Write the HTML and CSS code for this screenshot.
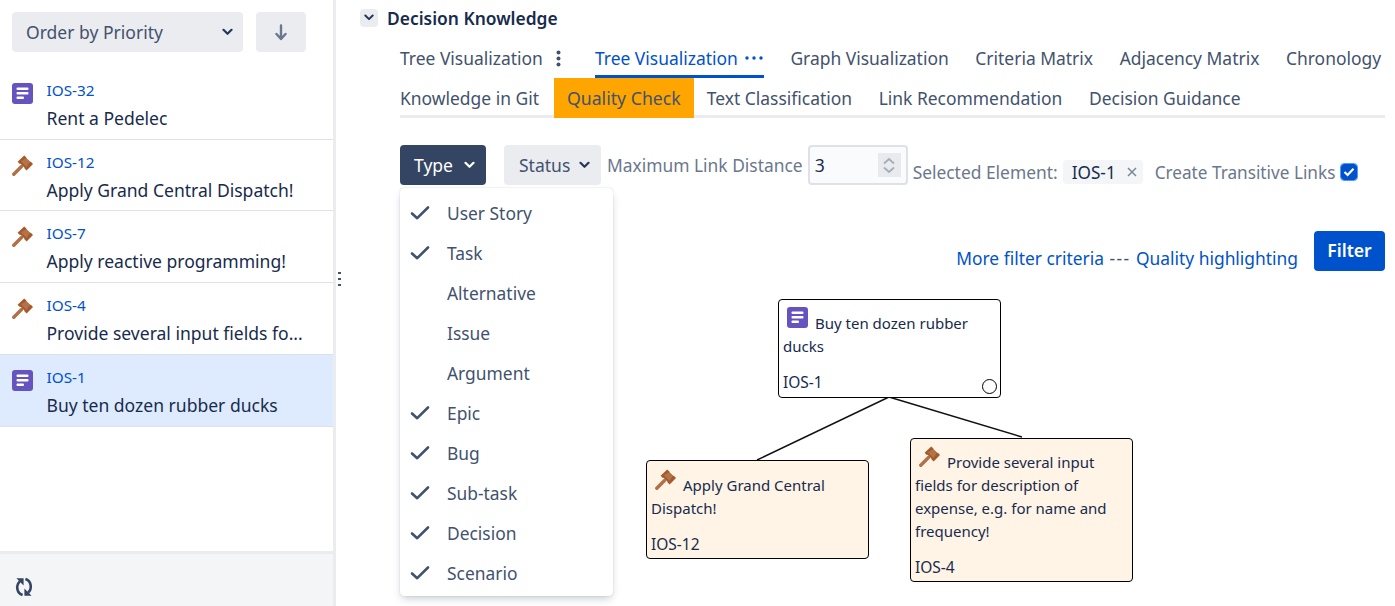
FILE: index.html
```html
<!DOCTYPE html>
<html lang="en">
<head>
<meta charset="utf-8">
<title>Decision Knowledge</title>
<link rel="stylesheet" href="styles.css">
</head>
<body>
<svg class="defs" width="0" height="0" aria-hidden="true">
  <defs>
    <symbol id="story" viewBox="0 0 21 21">
      <rect width="21" height="21" rx="3" fill="#6554c0"/>
      <rect x="4.5" y="4.5" width="12" height="2.6" rx="1" fill="#fff"/>
      <rect x="4.5" y="9" width="12" height="2.6" rx="1" fill="#fff"/>
      <rect x="4.5" y="13.4" width="7.5" height="2.6" rx="1" fill="#fff"/>
    </symbol>
    <symbol id="gavel" viewBox="0 0 21 21">
      <path d="M1.8 19.2 L9.5 11.5" stroke="#b0714a" stroke-width="3.4" stroke-linecap="round" fill="none"/>
      <path d="M5.6 6.8 L12.2 0.4 L14.4 2.4 L14.4 3.2 L18 6.8 L18.8 6.8 L21 9 L14.6 15.4 L12.4 13.2 L12.4 12.4 L8.6 8.8 L7.8 8.9 Z" fill="#a45a2a"/>
      <path d="M9 6.2 L14.2 3.2 L18 6.8 L14.4 12 Z" fill="#b5734a"/>
    </symbol>
    <symbol id="chev" viewBox="0 0 12 8">
      <path d="M1.6 1.6 L6 6 L10.4 1.6" fill="none" stroke="currentColor" stroke-width="2.4" stroke-linecap="round" stroke-linejoin="round"/>
    </symbol>
    <symbol id="check" viewBox="0 0 20 16">
      <path d="M2 8.5 L7.2 13.2 L18 2.5" fill="none" stroke="#42526e" stroke-width="2.6" stroke-linecap="round" stroke-linejoin="round"/>
    </symbol>
  </defs>
</svg>
<div class="page">
  <aside class="sidebar">
    <div class="sort-bar">
      <div class="select"><span>Order by Priority</span><svg class="chev"><use href="#chev"/></svg></div>
      <button class="sort-btn" aria-label="Sort direction">
        <svg width="12" height="17" viewBox="0 0 12 17"><path d="M6 1.5 V15 M1.5 10 L6 15 L10.5 10" fill="none" stroke="#6b778c" stroke-width="2.4" stroke-linecap="round" stroke-linejoin="round"/></svg>
      </button>
    </div>
    <ul class="issues">
      <li class="issue"><svg class="issue-icon"><use href="#story"/></svg><div class="issue-body"><a class="issue-key">IOS-32</a><div class="issue-title">Rent a Pedelec</div></div></li>
      <li class="issue"><svg class="issue-icon"><use href="#gavel"/></svg><div class="issue-body"><a class="issue-key">IOS-12</a><div class="issue-title">Apply Grand Central Dispatch!</div></div></li>
      <li class="issue"><svg class="issue-icon"><use href="#gavel"/></svg><div class="issue-body"><a class="issue-key">IOS-7</a><div class="issue-title">Apply reactive programming!</div></div></li>
      <li class="issue"><svg class="issue-icon"><use href="#gavel"/></svg><div class="issue-body"><a class="issue-key">IOS-4</a><div class="issue-title">Provide several input fields fo...</div></div></li>
      <li class="issue active"><svg class="issue-icon"><use href="#story"/></svg><div class="issue-body"><a class="issue-key">IOS-1</a><div class="issue-title">Buy ten dozen rubber ducks</div></div></li>
    </ul>
    <div class="side-footer">
      <svg width="20" height="20" viewBox="0 0 20 20"><path d="M8.6 18 C2.6 16.2 1.6 8.4 5.8 4.4 M11.4 2 C17.4 3.8 18.4 11.6 14.2 15.6" fill="none" stroke="#344563" stroke-width="2.6"/><path d="M2.4 1.2 L9.6 1.2 L9.6 8.4 Z M17.6 18.8 L10.4 18.8 L10.4 11.6 Z" fill="#344563"/></svg>
    </div>
  </aside>
  <div class="divider"><span class="grip"></span></div>
  <main class="main">
    <header class="section-head">
      <span class="toggle"><svg class="chev-sm"><use href="#chev"/></svg></span>
      <h2>Decision Knowledge</h2>
    </header>
    <nav class="tabs">
      <div class="tab-row">
        <span class="tab first">Tree Visualization<svg class="kebab" width="5" height="17" viewBox="0 0 5 17"><circle cx="2.5" cy="2.5" r="2" fill="#42526e"/><circle cx="2.5" cy="8.5" r="2" fill="#42526e"/><circle cx="2.5" cy="14.5" r="2" fill="#42526e"/></svg></span>
        <span class="tab current">Tree Visualization<svg class="dots" width="18" height="4" viewBox="0 0 18 4"><circle cx="2" cy="2" r="1.7" fill="#0052cc"/><circle cx="9" cy="2" r="1.7" fill="#0052cc"/><circle cx="16" cy="2" r="1.7" fill="#0052cc"/></svg></span>
        <span class="tab">Graph Visualization</span>
        <span class="tab">Criteria Matrix</span>
        <span class="tab">Adjacency Matrix</span>
        <span class="tab">Chronology</span>
      </div>
      <div class="tab-row lower">
        <span class="tab first">Knowledge in Git</span>
        <span class="tab quality">Quality Check</span>
        <span class="tab">Text Classification</span>
        <span class="tab">Link Recommendation</span>
        <span class="tab">Decision Guidance</span>
      </div>
    </nav>
    <div class="filters">
      <button class="drop open">Type<svg class="chev"><use href="#chev"/></svg></button>
      <button class="drop status">Status<svg class="chev"><use href="#chev"/></svg></button>
      <label class="muted dist-label">Maximum Link Distance</label>
      <div class="num-input"><span>3</span><span class="spin"><svg width="14" height="8" viewBox="0 0 14 8"><path d="M2 6.5 L7 2 L12 6.5" fill="none" stroke="#a5adba" stroke-width="1.8"/></svg><svg width="14" height="8" viewBox="0 0 14 8"><path d="M2 1.5 L7 6 L12 1.5" fill="none" stroke="#a5adba" stroke-width="1.8"/></svg></span></div>
      <label class="muted sel-label">Selected Element:</label>
      <span class="chip">IOS-1<svg width="10" height="10" viewBox="0 0 10 10"><path d="M1 1 L9 9 M9 1 L1 9" stroke="#7a869a" stroke-width="1.5"/></svg></span>
      <label class="muted trans-label">Create Transitive Links</label>
      <span class="checkbox"><svg width="12" height="10" viewBox="0 0 12 10"><path d="M1.5 5 L4.6 8 L10.5 1.8" fill="none" stroke="#fff" stroke-width="2.2"/></svg></span>
    </div>
    <div class="actions">
      <span class="links"><a>More filter criteria</a><span class="sep">---</span><a>Quality highlighting</a></span>
      <button class="filter-btn">Filter</button>
    </div>
    <div class="canvas">
      <svg class="edges" width="1035" height="335" viewBox="0 0 1035 335"><path d="M529 126 L397 189 M529 126 L662 166" fill="none" stroke="#111" stroke-width="1.4"/></svg>
      <div class="node root"><svg class="node-icon"><use href="#story"/></svg><span class="node-title">Buy ten dozen rubber ducks</span><div class="node-key">IOS-1</div><span class="node-ring"></span></div>
      <div class="node warn n12"><svg class="node-icon"><use href="#gavel"/></svg><span class="node-title">Apply Grand Central Dispatch!</span><div class="node-key">IOS-12</div></div>
      <div class="node warn n4"><svg class="node-icon"><use href="#gavel"/></svg><span class="node-title">Provide several input fields for description of expense, e.g. for name and frequency!</span><div class="node-key">IOS-4</div></div>
    </div>
  </main>
</div>
<ul class="menu">
  <li><svg class="tick"><use href="#check"/></svg>User Story</li>
  <li><svg class="tick"><use href="#check"/></svg>Task</li>
  <li class="off">Alternative</li>
  <li class="off">Issue</li>
  <li class="off">Argument</li>
  <li><svg class="tick"><use href="#check"/></svg>Epic</li>
  <li><svg class="tick"><use href="#check"/></svg>Bug</li>
  <li><svg class="tick"><use href="#check"/></svg>Sub-task</li>
  <li><svg class="tick"><use href="#check"/></svg>Decision</li>
  <li><svg class="tick"><use href="#check"/></svg>Scenario</li>
</ul>
</body>
</html>
```
FILE: styles.css
```css
* { box-sizing: border-box; }
html, body { margin: 0; height: 606px; overflow: hidden; background: #fff; }
body { font-family: "Noto Sans", "Open Sans", sans-serif; font-size: 17.55px; color: #172b4d; position: relative; }
.defs { position: absolute; }
.page { display: flex; height: 606px; }
.sidebar { width: 333px; flex: none; display: flex; flex-direction: column; }
.sort-bar { display: flex; gap: 13px; padding: 12px 0 0 12px; height: 68px; }
.select { width: 231px; height: 40px; background: #ebecf0; border-radius: 4px; display: flex; align-items: center; justify-content: space-between; padding: 0 10px 0 14px; color: #42526e; }
.chev { width: 11px; height: 8px; color: #253858; }
.sort-btn { width: 50px; height: 40px; background: #ebecf0; border: 0; border-radius: 4px; display: flex; align-items: center; justify-content: center; padding: 0; }
.issues { list-style: none; margin: 0; padding: 0; flex: 1; }
.issue { display: flex; gap: 13.5px; padding: 11px 12px 0; height: 72px; border-bottom: 1px solid #dfe1e6; }
.issue:nth-child(2) { height: 71px; }
.issue.active { background: #deebff; }
.issue-icon { width: 21px; height: 21px; flex: none; margin-top: 4px; }
.issue-body { min-width: 0; }
.issue-key { display: block; color: #0052cc; font-size: 15.3px; line-height: 22px; }
.issue-title { color: #172b4d; line-height: 28px; margin-top: 3px; white-space: nowrap; }
.side-footer { height: 55px; background: #f4f5f7; border-top: 3px solid #ebecf0; padding: 23px 0 0 14px; }
.divider { width: 3px; flex: none; background: #ebecf0; position: relative; }
.grip { position: absolute; left: 5px; top: 270px; width: 3px; height: 18px; background: radial-gradient(circle, #42526e 1.3px, transparent 1.5px) 0 0 / 3px 6px; }
.main { flex: 1; min-width: 0; padding: 0 10px 0 24px; display: flex; flex-direction: column; }
.section-head { display: flex; align-items: center; height: 39px; gap: 9px; padding-bottom: 4px; flex: none; }
.toggle { width: 18px; height: 18px; background: #ebecf0; border-radius: 4px; display: flex; align-items: center; justify-content: center; }
.chev-sm { width: 10px; height: 7px; color: #253858; }
.section-head h2 { margin: 0; font-size: 17.4px; font-weight: 600; color: #172b4d; }
.tabs { margin-left: 40px; height: 79px; flex: none; border-bottom: 3px solid #ebecf0; color: #42526e; font-size: 17.45px; }
.tab-row { display: flex; height: 39px; white-space: nowrap; }
.tab-row.lower { height: 40px; }
.tab { margin-left: 26.6px; display: flex; align-items: center; padding-bottom: 1px; }
.tab-row.lower .tab { padding-bottom: 0; }
.tab.first { margin-left: 0; }
.kebab { margin-left: 13px; margin-right: 7.5px; }
.tab.current { color: #0052cc; border-bottom: 3px solid #0052cc; padding-top: 2px; padding-bottom: 0; }
.dots { margin-left: 7px; margin-right: 1px; }
.tab-row .tab.quality { background: #ffa500; margin-left: 15px; margin-right: -13.6px; padding: 0 13px; font-size: 17.7px; }
.filters { display: flex; align-items: center; margin: 27px 0 0 40px; height: 40px; flex: none; white-space: nowrap; }
.drop { font: inherit; height: 40px; border: 0; border-radius: 4px; display: flex; align-items: center; justify-content: space-between; padding: 0 11px 0 14px; background: #ebecf0; color: #42526e; flex: none; }
.drop.open { background: #344563; color: #fff; width: 86px; }
.drop.open .chev { color: #fff; }
.status { margin-left: 18px; width: 97px; padding-left: 15px; }
.muted { color: #6b778c; white-space: nowrap; }
.dist-label { margin-left: 6px; font-size: 17.4px; }
.num-input { width: 100px; height: 40px; margin-left: 5px; border: 2px solid #dfe1e6; border-radius: 4px; background: #fafbfc; padding: 0 5px; display: flex; align-items: center; justify-content: space-between; color: #172b4d; flex: none; }
.spin { width: 23px; height: 24px; background: #e9eaee; display: flex; flex-direction: column; align-items: center; justify-content: center; gap: 1px; }
.sel-label { margin: 14px 0 0 5px; font-size: 17.4px; }
.chip { margin: 14px 0 0 5px; height: 24px; width: 80px; background: #f4f5f7; border-radius: 4px; padding: 0 6px 0 9px; display: flex; align-items: center; justify-content: space-between; font-size: 17.2px; flex: none; }
.trans-label { margin: 14px 0 0 12px; font-size: 17.2px; }
.checkbox { width: 16px; height: 16px; margin: 14px 0 0 6px; border-radius: 3px; background: #0052cc; display: flex; align-items: center; justify-content: center; outline: 1px solid #4c9aff; flex: none; }
.actions { display: flex; justify-content: flex-end; align-items: center; margin-top: 46px; height: 40px; gap: 16px; flex: none; }
.links { color: #42526e; padding-top: 14px; font-size: 17.4px; }
.links a { color: #0052cc; }
.sep { margin: 0 5.5px; letter-spacing: 1.4px; }
.filter-btn { font: inherit; font-weight: 600; width: 71px; height: 40px; border: 0; border-radius: 4px; background: #0052cc; color: #fff; padding: 0 0 2px; }
.canvas { position: relative; flex: 1; }
.edges { position: absolute; left: 0; top: 0; }
.node { position: absolute; width: 223px; border: 1px solid #000; border-radius: 4px; background: #fff; font-size: 15px; line-height: 23px; padding: 7px 4px 0; color: #172b4d; }
.node.warn { background: #fff4e6; }
.root { left: 418px; top: 28px; height: 99px; }
.n12 { left: 286px; top: 189px; height: 99px; padding-top: 8px; }
.n4 { left: 550px; top: 167px; height: 144px; }
.node-icon { width: 21px; height: 21px; margin: 0 7px 0 4px; vertical-align: 1px; }
.node-key { margin-top: 13px; font-size: 15.5px; }
.node-ring { position: absolute; right: 3px; bottom: 3px; width: 15px; height: 15px; border: 1px solid #000; border-radius: 50%; }
.menu { position: absolute; left: 400px; top: 188px; width: 213px; height: 408px; margin: 0; padding: 6px 0; list-style: none; background: #fff; border-radius: 4px; box-shadow: 0 4px 8px -2px rgba(9,30,66,.25), 0 0 1px rgba(9,30,66,.31); color: #42526e; font-size: 17.4px; }
.menu li { height: 40px; display: flex; align-items: center; gap: 17px; padding: 0 0 2px 10px; }
.menu li.off { padding-left: 47px; }
.tick { width: 20px; height: 16px; flex: none; margin-top: -1px; }
```
